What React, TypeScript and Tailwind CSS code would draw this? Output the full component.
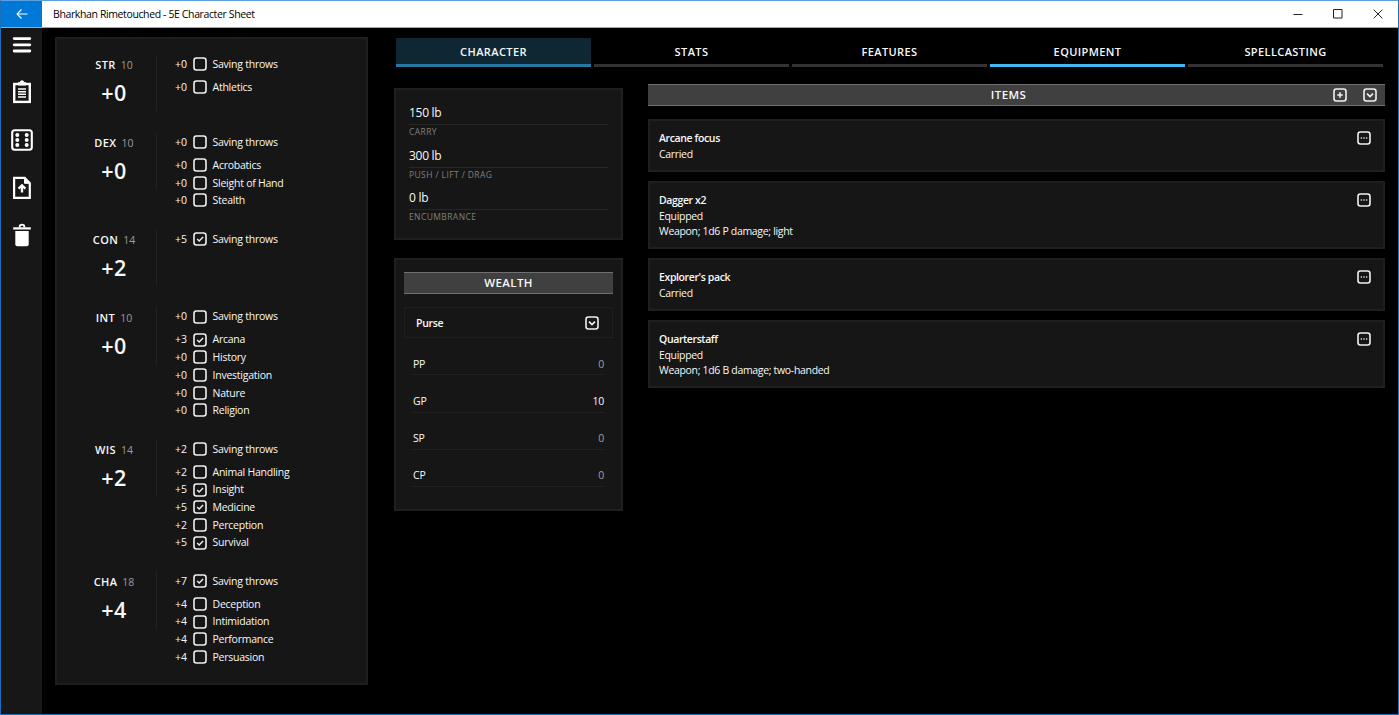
import { ReactNode } from "react";
import clsx from "clsx";

type Skill = { name: string; mod: string; checked?: boolean };
type Ability = { name: string; score: number; mod: string; save: Skill; skills: Skill[] };

const abilities: Ability[] = [
  {
    name: "STR",
    score: 10,
    mod: "+0",
    save: { name: "Saving throws", mod: "+0" },
    skills: [{ name: "Athletics", mod: "+0" }],
  },
  {
    name: "DEX",
    score: 10,
    mod: "+0",
    save: { name: "Saving throws", mod: "+0" },
    skills: [
      { name: "Acrobatics", mod: "+0" },
      { name: "Sleight of Hand", mod: "+0" },
      { name: "Stealth", mod: "+0" },
    ],
  },
  {
    name: "CON",
    score: 14,
    mod: "+2",
    save: { name: "Saving throws", mod: "+5", checked: true },
    skills: [],
  },
  {
    name: "INT",
    score: 10,
    mod: "+0",
    save: { name: "Saving throws", mod: "+0" },
    skills: [
      { name: "Arcana", mod: "+3", checked: true },
      { name: "History", mod: "+0" },
      { name: "Investigation", mod: "+0" },
      { name: "Nature", mod: "+0" },
      { name: "Religion", mod: "+0" },
    ],
  },
  {
    name: "WIS",
    score: 14,
    mod: "+2",
    save: { name: "Saving throws", mod: "+2" },
    skills: [
      { name: "Animal Handling", mod: "+2" },
      { name: "Insight", mod: "+5", checked: true },
      { name: "Medicine", mod: "+5", checked: true },
      { name: "Perception", mod: "+2" },
      { name: "Survival", mod: "+5", checked: true },
    ],
  },
  {
    name: "CHA",
    score: 18,
    mod: "+4",
    save: { name: "Saving throws", mod: "+7", checked: true },
    skills: [
      { name: "Deception", mod: "+4" },
      { name: "Intimidation", mod: "+4" },
      { name: "Performance", mod: "+4" },
      { name: "Persuasion", mod: "+4" },
    ],
  },
];

const tabs = ["CHARACTER", "STATS", "FEATURES", "EQUIPMENT", "SPELLCASTING"];

const weights = [
  { label: "CARRY", value: "150 lb" },
  { label: "PUSH / LIFT / DRAG", value: "300 lb" },
  { label: "ENCUMBRANCE", value: "0 lb" },
];

const coins = [
  { label: "PP", value: 0 },
  { label: "GP", value: 10 },
  { label: "SP", value: 0 },
  { label: "CP", value: 0 },
];

const items = [
  { name: "Arcane focus", lines: ["Carried"] },
  { name: "Dagger x2", lines: ["Equipped", "Weapon; 1d6 P damage; light"] },
  { name: "Explorer's pack", lines: ["Carried"] },
  { name: "Quarterstaff", lines: ["Equipped", "Weapon; 1d6 B damage; two-handed"] },
];

// rounded square used for check boxes and small buttons
const Box = ({ children }: { children?: ReactNode }) => (
  <svg width="14" height="14" viewBox="0 0 14 14" fill="none" stroke="#f0f0f0" className="shrink-0">
    <rect x="1" y="1" width="12" height="12" rx="2.4" strokeWidth="1.6" />
    {children}
  </svg>
);

const Check = () => <path d="M4.2 7.1l2 2 3.9-4" strokeWidth="1.4" />;
const Chevron = () => <path d="M4 5.7L7 8.5l3-2.8" strokeWidth="1.7" />;
const Plus = () => <path d="M7 4.2v5.6M4.2 7h5.6" strokeWidth="1.6" />;
const Dots = () => <path d="M3.7 7h1.4M6.3 7h1.4M8.9 7h1.4" strokeWidth="1.4" stroke="#d0d0d0" />;

const SkillRow = ({ skill }: { skill: Skill }) => (
  <div className="flex h-[17.7px] items-center text-[10.5px] leading-none">
    <span className="w-[18px]">{skill.mod}</span>
    <Box>{skill.checked && <Check />}</Box>
    <span className="ml-[5.5px] whitespace-nowrap tracking-[-0.24px]">{skill.name}</span>
  </div>
);

const AbilityBlock = ({ ability }: { ability: Ability }) => (
  <div className="flex min-h-[77.9px] pb-[20.6px]">
    <div className="flex h-14 w-[87px] flex-col items-center border-r border-[#222] pl-[2px]">
      <div className="mt-[1.8px] flex gap-[5px] text-[11px] leading-4">
        <span className="font-semibold tracking-[0.4px]">{ability.name}</span>
        <span className="text-[10.5px] text-[#9c9c9c]">{ability.score}</span>
      </div>
      <div className="mt-[6.2px] text-[21.5px] font-semibold leading-7 tracking-[0.5px]">{ability.mod}</div>
    </div>
    <div className="ml-[18px]">
      <SkillRow skill={ability.save} />
      <div className="mt-[5.4px]">
        {ability.skills.map((s) => (
          <SkillRow key={s.name} skill={s} />
        ))}
      </div>
    </div>
  </div>
);

const Sidebar = () => (
  <div className="flex w-[41px] flex-col items-center bg-[#171717] pt-[6px]">
    <svg width="24" height="24" viewBox="0 0 24 24" stroke="#fff" strokeWidth="2.8" strokeLinecap="round">
      <path d="M4.2 4.6h15.6M4.2 10.8h15.6M4.2 17h15.6" />
    </svg>
    <svg className="mt-[22px]" width="24" height="24" viewBox="0 0 24 24" fill="none" stroke="#fff">
      <rect x="4.2" y="4" width="15.6" height="17.9" strokeWidth="2.4" />
      <path d="M8 5V2.8h2a2 2 0 0 1 4 0h2V5z" fill="#fff" strokeWidth="1" />
      <path d="M8 9h8M8 11.7h8M8 14.3h8M8 17h8" strokeWidth="1.4" />
    </svg>
    <svg className="mt-6" width="24" height="24" viewBox="0 0 24 24" fill="none" stroke="#fff">
      <rect x="2.2" y="2.2" width="19.6" height="19.6" rx="2.5" strokeWidth="2.1" />
      <g fill="#fff" stroke="none">
        <circle cx="7.3" cy="7" r="2" />
        <circle cx="7.3" cy="12" r="2" />
        <circle cx="7.3" cy="17" r="2" />
        <circle cx="16.7" cy="7" r="2" />
        <circle cx="16.7" cy="12" r="2" />
        <circle cx="16.7" cy="17" r="2" />
      </g>
    </svg>
    <svg className="mt-6" width="24" height="24" viewBox="0 0 24 24" fill="none" stroke="#fff">
      <path d="M4.1 1.9h10.6l5.1 5.2v14.7H4.1z" strokeWidth="2.2" />
      <path d="M14.5 2v5.3H20z" fill="#fff" strokeWidth="1" />
      <path d="M12 16.5V10.5" strokeWidth="2.4" />
      <path d="M8.6 12.6L12 9.2l3.4 3.4" strokeWidth="2.2" />
    </svg>
    <svg className="mt-[23px]" width="24" height="24" viewBox="0 0 24 24" fill="none" stroke="#fff">
      <path d="M9.6 4.6V4a2.4 2.4 0 0 1 4.8 0v.6" strokeWidth="1.8" />
      <path d="M3.2 5.4h17.6" strokeWidth="2.2" />
      <path d="M5.3 8h13.4v13.2a2 2 0 0 1-2 2H7.3a2 2 0 0 1-2-2z" fill="#fff" stroke="none" />
    </svg>
  </div>
);

const TitleBar = () => (
  <div className="flex h-[27px] items-center border-b border-[#a6a6a6] bg-white text-black">
    <div className="flex h-full w-[41px] items-center justify-center bg-[#0078d7]">
      <svg width="12" height="12" viewBox="0 0 12 12" fill="none" stroke="#fff" strokeWidth="1.1">
        <path d="M11.5 6H1M5.5 1.5L1 6l4.5 4.5" />
      </svg>
    </div>
    <div className="ml-[11px] flex-1 text-[10.5px] leading-none tracking-[-0.38px]">
      Bharkhan Rimetouched - 5E Character Sheet
    </div>
    <div className="mr-[15px] flex gap-[30px]">
      <svg width="10" height="10" viewBox="0 0 10 10" stroke="#222">
        <path d="M.5 5.5h9" />
      </svg>
      <svg width="10" height="10" viewBox="0 0 10 10" fill="none" stroke="#222">
        <path d="M.5.5h8.5v8.5H.5z" />
      </svg>
      <svg width="10" height="10" viewBox="0 0 10 10" stroke="#222">
        <path d="M.7.7l8.6 8.6M9.3.7L.7 9.3" />
      </svg>
    </div>
  </div>
);

export default function App() {
  return (
    <div className="flex h-[715px] w-[1399px] flex-col overflow-hidden border border-[#1a6fb8] border-t-[#5a9fe0] bg-black font-['Open_Sans',sans-serif] text-[#f8f8f8]">
      <TitleBar />
      <div className="flex flex-1">
        <Sidebar />

        <div className="ml-[13px] mt-[9px] h-[648px] w-[313px] border-2 border-[#1f1f1f] bg-[#161616] pl-[13px] pt-[16.3px]">
          {abilities.map((a) => (
            <AbilityBlock key={a.name} ability={a} />
          ))}
        </div>

        <div className="ml-[26px] mt-[10px] w-[991px]">
          <div className="ml-[2px] flex gap-[3px]">
            {tabs.map((tab) => (
              <div
                key={tab}
                className={clsx(
                  "flex h-[29px] w-[195px] items-center justify-center border-b-[3px] pt-[2px] text-[11px] font-semibold tracking-[0.4px]",
                  tab === "CHARACTER" && "border-[#2677a3] bg-[#0e2733]",
                  tab === "EQUIPMENT" && "border-[#42b8f0]",
                  tab !== "CHARACTER" && tab !== "EQUIPMENT" && "border-[#333]"
                )}
              >
                {tab}
              </div>
            ))}
          </div>

          <div className="flex">
            <div className="mt-[21px] flex w-[229px] flex-col gap-[18px]">
              <div className="h-[152px] border-2 border-[#1f1f1f] bg-[#161616] px-[13px] pt-[13.3px]">
                {weights.map((w) => (
                  <div key={w.label} className="h-[42.3px]">
                    <div className="h-[22px] border-b border-[#262626] text-[12px] leading-[19px] tracking-[-0.28px]">
                      {w.value}
                    </div>
                    <div className="text-[8.5px] leading-[13px] tracking-[0.4px] text-[#808080]">{w.label}</div>
                  </div>
                ))}
              </div>

              <div className="h-[253px] border-2 border-[#1f1f1f] bg-[#161616] px-2 pt-3">
                <div className="flex h-[22px] items-center justify-center border-y border-[#707070] bg-[#404040] text-[11.5px] font-semibold tracking-[0.4px]">
                  WEALTH
                </div>
                <div className="mt-[13px] flex h-[31px] items-center justify-between border border-[#1f1f1f] pl-[11px] pr-[13px] text-[10.5px] font-semibold tracking-[-0.3px]">
                  <span className="pt-[2px]">Purse</span>
                  <Box>
                    <Chevron />
                  </Box>
                </div>
                <div className="px-[9px]">
                  {coins.map((c) => (
                    <div
                      key={c.label}
                      className="flex h-[37.3px] items-end justify-between border-b border-[#222] pb-[2px] text-[10.5px] tracking-[-0.2px]"
                    >
                      <span>{c.label}</span>
                      <span className={c.value ? "" : "text-[#a0a0a0]"}>{c.value}</span>
                    </div>
                  ))}
                </div>
              </div>
            </div>

            <div className="ml-[25px] mt-[17px] w-[737px]">
              <div className="flex h-[22px] items-center border-y border-[#707070] bg-[#404040]">
                <div className="ml-[36px] flex-1 text-center text-[11.5px] font-semibold tracking-[0.4px]">ITEMS</div>
                <div className="mr-2 flex gap-4">
                  <Box>
                    <Plus />
                  </Box>
                  <Box>
                    <Chevron />
                  </Box>
                </div>
              </div>
              <div className="mt-[12.6px] flex flex-col gap-[9px]">
                {items.map((item) => (
                  <div
                    key={item.name}
                    className={clsx(
                      "flex justify-between border-2 border-[#1f1f1f] bg-[#161616] pl-[9px] pr-[12px] pt-[10px] text-[10.5px] leading-[15px]",
                      item.lines.length > 1 ? "h-[68px]" : "h-[53px]"
                    )}
                  >
                    <div className="pt-[0.8px]">
                      <div className="mb-px font-semibold tracking-[-0.38px]">{item.name}</div>
                      {item.lines.map((line) => (
                        <div key={line} className="tracking-[-0.32px]">
                          {line}
                        </div>
                      ))}
                    </div>
                    <Box>
                      <Dots />
                    </Box>
                  </div>
                ))}
              </div>
            </div>
          </div>
        </div>
      </div>
    </div>
  );
}
